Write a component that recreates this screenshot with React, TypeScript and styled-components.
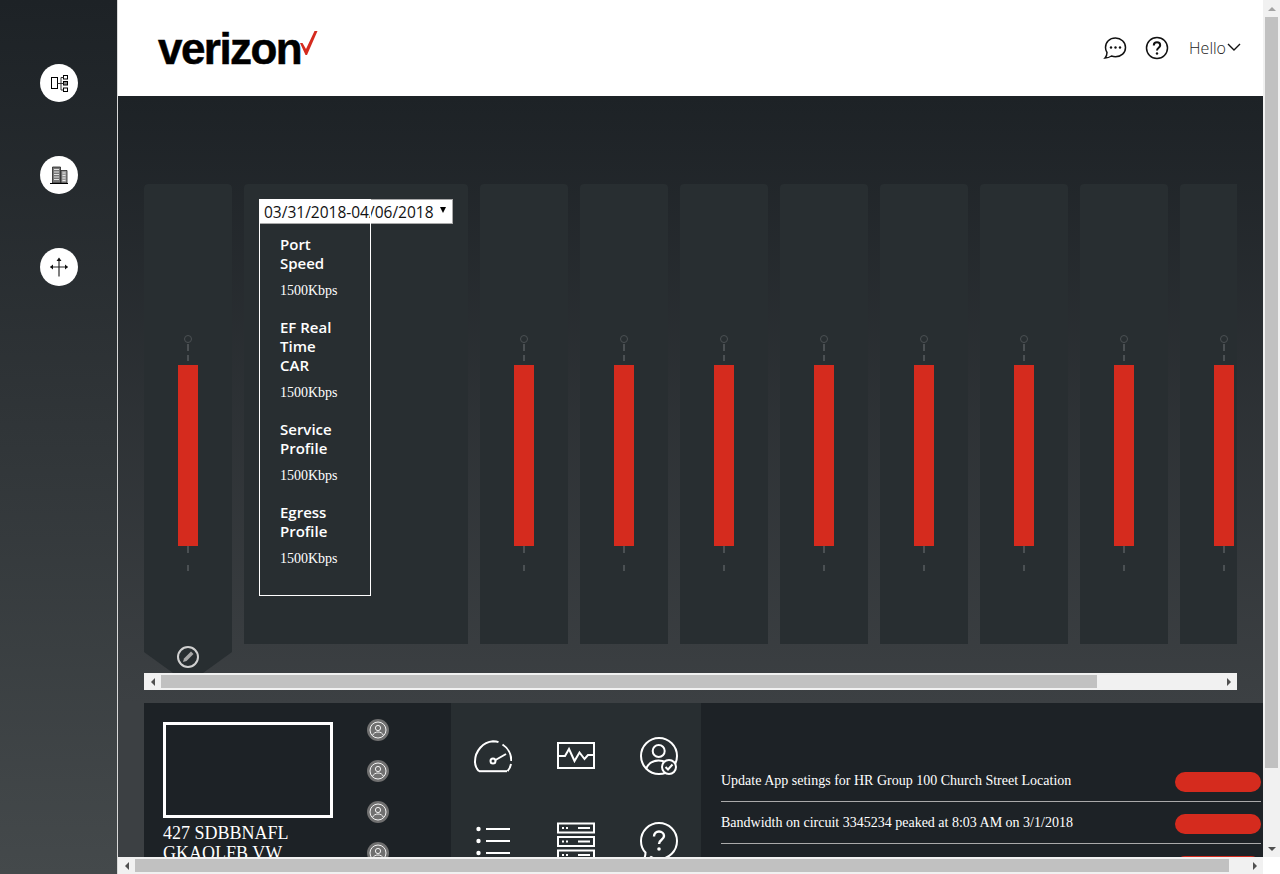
import React from "react";
import styled, { createGlobalStyle } from "styled-components";

const narrowCards = [0, 1, 2, 3, 4, 5, 6, 7];

const details = [
  { title: "Port Speed", value: "1500Kbps" },
  { title: "EF Real Time CAR", value: "1500Kbps" },
  { title: "Service Profile", value: "1500Kbps" },
  { title: "Egress Profile", value: "1500Kbps" },
];

const notifications = [
  "Update App setings for HR Group 100 Church Street Location",
  "Bandwidth on circuit 3345234 peaked at 8:03 AM on 3/1/2018",
  "",
];

const GlobalStyle = createGlobalStyle`
  html, body {
    margin: 0;
    padding: 0;
    height: 100%;
    overflow: hidden;
    background: #fff;
  }
`;

const Page = styled.div`
  display: flex;
  width: 1280px;
  height: 874px;
  overflow: hidden;
  font-family: "Liberation Serif", serif;
`;

const Sidebar = styled.nav`
  flex: none;
  box-sizing: border-box;
  width: 118px;
  height: 874px;
  padding-top: 64px;
  border-right: 1px solid #d8d8d8;
  background: linear-gradient(#1d2226, #44494b);
  display: flex;
  flex-direction: column;
  align-items: center;
  gap: 54px;
`;

const NavButton = styled.button`
  width: 38px;
  height: 38px;
  padding: 0;
  border: 0;
  border-radius: 50%;
  background: #fff;
  display: block;
`;

const Main = styled.div`
  flex: none;
  width: 1162px;
  display: flex;
  flex-direction: column;
`;

const MainTop = styled.div`
  height: 857px;
  display: flex;
`;

const Content = styled.div`
  width: 1145px;
  height: 857px;
  overflow: hidden;
`;

const Header = styled.header`
  height: 96px;
  background: #fff;
  display: flex;
  align-items: center;
  padding: 0 21px 0 40px;
`;

const Logo = styled.div`
  display: flex;
  align-items: flex-start;
  height: 40px;
  margin-top: 1px;
`;

const LogoText = styled.span`
  font-family: "Liberation Sans", sans-serif;
  font-weight: 700;
  font-size: 44px;
  line-height: 40px;
  letter-spacing: -1.55px;
  color: #000;
  -webkit-text-stroke: 0.5px #000;
`;

const LogoCheck = styled.svg`
  flex: none;
  margin: 2px 0 0 -1px;
`;

const HeaderActions = styled.div`
  margin-left: auto;
  display: flex;
  align-items: center;
`;

const HeaderIcon = styled.svg`
  width: 24px;
  height: 24px;
  margin-right: 18px;
  display: block;
`;

const Hello = styled.span`
  font-family: "Open Sans", sans-serif;
  font-size: 16px;
  font-weight: 300;
  color: #222;
  margin-left: 2px;
`;

const HelloChevron = styled.svg`
  flex: none;
  margin-top: -3px;
`;

const Body = styled.main`
  padding: 88px 0 0 26px;
  height: 761px;
  box-sizing: border-box;
  background: linear-gradient(#1d2226 0, #3c4043 607px);
`;

const Strip = styled.section`
  width: 1093px;
`;

const CardRow = styled.div`
  display: flex;
  gap: 12px;
  height: 489px;
  overflow: hidden;
`;

const Card = styled.div<{ $wide?: boolean }>`
  flex: none;
  position: relative;
  box-sizing: border-box;
  width: ${(p) => (p.$wide ? "224px" : "88px")};
  height: 460px;
  background: #282e31;
  border-radius: 4px 4px 0 0;
  padding-top: 151px;
  display: flex;
  flex-direction: column;
  align-items: center;
`;

const FirstCard = styled(Card)`
  height: 489px;
  clip-path: path("M0 4 Q0 0 4 0 H84 Q88 0 88 4 V468 L59 489 H29 L0 468 Z");
`;

const Whisker = styled.svg`
  display: block;
  width: 10px;
`;

const Bar = styled.div`
  width: 20px;
  height: 181px;
  background: #d52b1e;
`;

const PencilIcon = styled.svg`
  width: 24px;
  height: 24px;
  margin-top: 73px;
  display: block;
`;

const DetailCard = styled(Card)`
  padding: 15px 0 0 15px;
  display: block;
`;

const DateSelect = styled.div`
  box-sizing: border-box;
  width: 194px;
  height: 25px;
  background: #fff;
  border: 1px solid #a9a9a9;
  border-left: 0;
  display: flex;
  align-items: center;
  padding-left: 5px;
  font-family: "Open Sans", sans-serif;
  font-size: 15.5px;
  color: #111;
  white-space: nowrap;
`;

const SelectArrow = styled.span`
  width: 0;
  height: 0;
  margin: -4px 0 0 6px;
  border-left: 3.5px solid transparent;
  border-right: 3.5px solid transparent;
  border-top: 6px solid #000;
`;

const DetailBox = styled.div`
  position: absolute;
  left: 15px;
  top: 15px;
  box-sizing: border-box;
  width: 112px;
  height: 397px;
  border: 1px solid #fff;
  padding: 35px 20px 0;
  color: #fff;
`;

const DetailItem = styled.div`
  margin-bottom: 19px;
`;

const DetailTitle = styled.div`
  max-width: 66px;
  font-family: "Open Sans", sans-serif;
  font-weight: 600;
  font-size: 15px;
  line-height: 19px;
`;

const DetailValue = styled.div`
  font-size: 14px;
  line-height: 16px;
  margin-top: 10px;
`;

const HBar = styled.div`
  height: 17px;
  background: #f1f1f1;
  display: flex;
  align-items: center;
  flex: none;
`;

const VBar = styled.div`
  width: 17px;
  height: 857px;
  background: #f1f1f1;
  display: flex;
  flex-direction: column;
  align-items: center;
`;

const ArrowBox = styled.div`
  flex: none;
  width: 17px;
  height: 17px;
  display: flex;
  align-items: center;
  justify-content: center;
`;

const Triangle = styled.span<{ $dir: "left" | "right" | "up" | "down" }>`
  width: 0;
  height: 0;
  border-style: solid;
  border-color: transparent;
  border-width: ${(p) =>
    p.$dir === "left" || p.$dir === "right" ? "4px 0" : "0 4px"};
  ${(p) => {
    if (p.$dir === "left") return "border-right: 4px solid #505050;";
    if (p.$dir === "right") return "border-left: 4px solid #505050;";
    if (p.$dir === "up") return "border-bottom: 4px solid #a3a3a3;";
    return "border-top: 4px solid #505050;";
  }}
`;

const HThumb = styled.div<{ $size: number }>`
  width: ${(p) => p.$size}px;
  height: 13px;
  background: #c1c1c1;
`;

const VThumb = styled.div`
  width: 13px;
  height: 751px;
  background: #c1c1c1;
`;

const Spacer = styled.div`
  flex: 1;
`;

const Corner = styled.div`
  width: 17px;
  height: 17px;
  background: #fff;
`;

const BottomRow = styled.section`
  margin-top: 13px;
  height: 200px;
  display: flex;
`;

const SitePanel = styled.div`
  flex: none;
  box-sizing: border-box;
  width: 307px;
  padding: 16px 0 0 19px;
  background: #1d2226;
  display: flex;
  gap: 34px;
`;

const SiteInfo = styled.div`
  width: 170px;
  padding-top: 3px;
  color: #fff;
  font-size: 18px;
  line-height: 20px;
`;

const SitePhoto = styled.div`
  box-sizing: border-box;
  height: 96px;
  border: 3px solid #fff;
  margin-bottom: 5px;
`;

const Avatars = styled.div`
  display: flex;
  flex-direction: column;
  gap: 19px;
`;

const Avatar = styled.svg`
  width: 22px;
  height: 22px;
  display: block;
`;

const ToolPanel = styled.div`
  flex: none;
  box-sizing: border-box;
  width: 250px;
  padding-top: 34px;
  background: #282e31;
  display: grid;
  grid-template-columns: repeat(3, 83px);
  grid-auto-rows: 38px;
  row-gap: 47px;
  justify-content: center;
  justify-items: center;
`;

const ToolIcon = styled.svg`
  width: 38px;
  height: 38px;
  display: block;
`;

const NotificationPanel = styled.div`
  flex: 1;
  padding: 57px 0 0 20px;
  background: #1d2226;
`;

const NotificationRow = styled.div`
  box-sizing: border-box;
  width: 540px;
  height: 42px;
  border-bottom: 1px solid #aaa;
  display: flex;
  align-items: center;
  justify-content: space-between;
  color: #fff;
  font-size: 14px;
`;

const Pill = styled.span`
  width: 86px;
  height: 20px;
  border-radius: 10px;
  background: #d52b1e;
  margin-top: 3px;
`;

const Gauge = () => (
  <>
    <Whisker width="10" height="30" viewBox="0 0 10 30">
      <circle cx="5" cy="4" r="3.5" fill="none" stroke="#4b5053" />
      <path d="M5 9v7M5 20v6" stroke="#4b5053" strokeWidth="2" fill="none" />
    </Whisker>
    <Bar />
    <Whisker width="10" height="26" viewBox="0 0 10 26">
      <path d="M5 0v7M5 19v6" stroke="#4b5053" strokeWidth="2" fill="none" />
    </Whisker>
  </>
);

const UserIcon = () => (
  <Avatar viewBox="0 0 22 22">
    <circle cx="11" cy="11" r="11" fill="#707070" />
    <circle cx="11" cy="11" r="8" fill="none" stroke="#f2f2f2" strokeWidth="1" />
    <circle cx="11" cy="9" r="2.6" fill="none" stroke="#f2f2f2" strokeWidth="1" />
    <path d="M5.500 16.500c1-2.500 3-3.500 5.500-3.500s4.500 1 5.500 3.500" fill="none" stroke="#f2f2f2" strokeWidth="1" />
  </Avatar>
);

const App: React.FC = () => {
  return (
    <Page>
      <GlobalStyle />
      <Sidebar>
        <NavButton>
          <svg width="38" height="38" viewBox="0 0 38 38" fill="none" stroke="#000">
            <rect x="11.500" y="13.500" width="6" height="11" />
            <rect x="23.500" y="11.500" width="4" height="3.500" />
            <rect x="23.500" y="17.500" width="4" height="3.500" fill="#888" />
            <rect x="23.500" y="24" width="4" height="3.500" />
            <path d="M17.500 19.500h6M21 13.500v12.500M21 13.500h2.500M21 26h2.500" stroke="#333" />
          </svg>
        </NavButton>
        <NavButton>
          <svg width="38" height="38" viewBox="0 0 38 38">
            <path d="M12.500 11h8v16h-8z" fill="#777" stroke="#222" strokeWidth="0.8" />
            <path d="M21 14.500h6V27h-6z" fill="#999" stroke="#222" strokeWidth="0.8" />
            <path d="M14 13.500h5M14 16h5M14 18.500h5M14 21h5M14 23.500h5" stroke="#eee" strokeWidth="0.9" />
            <path d="M22.500 17h3M22.500 19.500h3M22.500 22h3M22.500 24.500h3" stroke="#eee" strokeWidth="0.9" />
            <path d="M10 27.500h18" stroke="#000" />
          </svg>
        </NavButton>
        <NavButton>
          <svg width="38" height="38" viewBox="0 0 38 38" fill="none">
            <path d="M19 11v17.500" stroke="#555" strokeWidth="1.500" />
            <path d="M10.500 19h17" stroke="#222" />
            <path d="M19 9.500l-2.500 3.500h5zM10 19l3-2.500v5zM28 19l-3-2.500v5z" fill="#111" />
          </svg>
        </NavButton>
      </Sidebar>
      <Main>
        <MainTop>
          <Content>
            <Header>
              <Logo>
                <LogoText>verizon</LogoText>
                <LogoCheck width="18" height="24" viewBox="0 0 18 24">
                  <path d="M0 12l2.500 0 3.500 6L14.500 0H17.500L7 24H5.500z" fill="#d52b1e" />
                </LogoCheck>
              </Logo>
              <HeaderActions>
                <HeaderIcon viewBox="0 0 24 24" fill="none" stroke="#111" strokeWidth="1.500">
                  <path d="M12.500 2C6.500 2 2.500 6 2.500 11.500c0 2 .5 3.600 1.500 5 0 2-.5 4-2 5.500 2.500 0 5-1 6.500-2 1.300.5 2.700.7 4 .7 5.700 0 10-3.800 10-9.200S18 2 12.500 2z" />
                  <circle cx="8" cy="11.500" r="1.200" fill="#111" stroke="none" />
                  <circle cx="12.500" cy="11.500" r="1.200" fill="#111" stroke="none" />
                  <circle cx="17" cy="11.500" r="1.200" fill="#111" stroke="none" />
                </HeaderIcon>
                <HeaderIcon viewBox="0 0 24 24" fill="none" stroke="#111" strokeWidth="1.500">
                  <circle cx="12" cy="12" r="10.500" />
                  <path d="M8.800 9.500c0-2 1.400-3.200 3.200-3.200s3.200 1.200 3.200 2.900c0 2.600-3.200 2.400-3.200 5.300" strokeWidth="2" />
                  <circle cx="12" cy="17.500" r="1.200" fill="#111" stroke="none" />
                </HeaderIcon>
                <Hello>Hello</Hello>
                <HelloChevron width="16" height="10" viewBox="0 0 16 10" fill="none" stroke="#111" strokeWidth="1.400">
                  <path d="M2 2l6 6 6-6" />
                </HelloChevron>
              </HeaderActions>
            </Header>
            <Body>
              <Strip>
                <CardRow>
                  <FirstCard>
                    <Gauge />
                    <PencilIcon viewBox="0 0 24 24" fill="none">
                      <circle cx="12" cy="12" r="10" stroke="#d0d0d0" strokeWidth="2" />
                      <path d="M15 6.500l2.500 2.500-7 7-3.500 1 1-3.500z" fill="#a8a8a8" />
                    </PencilIcon>
                  </FirstCard>
                  <DetailCard $wide>
                    <DateSelect>
                      03/31/2018-04/06/2018
                      <SelectArrow />
                    </DateSelect>
                    <DetailBox>
                      {details.map((item) => (
                        <DetailItem key={item.title}>
                          <DetailTitle>{item.title}</DetailTitle>
                          <DetailValue>{item.value}</DetailValue>
                        </DetailItem>
                      ))}
                    </DetailBox>
                  </DetailCard>
                  {narrowCards.map((id) => (
                    <Card key={id}>
                      <Gauge />
                    </Card>
                  ))}
                </CardRow>
                <HBar>
                  <ArrowBox>
                    <Triangle $dir="left" />
                  </ArrowBox>
                  <HThumb $size={936} />
                  <Spacer />
                  <ArrowBox>
                    <Triangle $dir="right" />
                  </ArrowBox>
                </HBar>
              </Strip>
              <BottomRow>
                <SitePanel>
                  <SiteInfo>
                    <SitePhoto />
                    427 SDBBNAFL GKAOLFB VW
                  </SiteInfo>
                  <Avatars>
                    <UserIcon />
                    <UserIcon />
                    <UserIcon />
                    <UserIcon />
                  </Avatars>
                </SitePanel>
                <ToolPanel>
                  <ToolIcon viewBox="0 0 38 38" fill="none" stroke="#fff" strokeWidth="2">
                    <path d="M5 34.200C2.200 31.500 1 28 1 24.500 1 14 9 5 19 4.300c2 0 4 .2 5.500.8M28.500 7.500c5.500 3.500 9 10 8.800 16.500M37 27c-.5 2.500-1.500 5-3.500 7.200" />
                    <path d="M5 34.200h28" />
                    <circle cx="19" cy="24" r="2.500" />
                    <path d="M21.500 23l10.500-6" />
                  </ToolIcon>
                  <ToolIcon viewBox="0 0 38 38" fill="none" stroke="#fff" strokeWidth="2">
                    <rect x="1" y="6" width="36" height="25" />
                    <path d="M1 19h7l4-7 5.500 12 5-8.500 5 6.500 3.500-4H37" />
                  </ToolIcon>
                  <ToolIcon viewBox="0 0 38 38" fill="none" stroke="#fff" strokeWidth="2">
                    <circle cx="19" cy="19" r="18" />
                    <circle cx="18.700" cy="14" r="6" />
                    <path d="M6 32c2.500-6 7-8.500 12.500-8.500 3 0 5.500.7 8 2" />
                    <circle cx="29" cy="30" r="7" fill="#282e31" />
                    <path d="M25.500 30l2.500 2.500 4.500-5" />
                  </ToolIcon>
                  <ToolIcon viewBox="0 0 38 38" fill="#fff" stroke="none">
                    <circle cx="4.500" cy="7" r="2.200" />
                    <circle cx="4.500" cy="19" r="2.200" />
                    <circle cx="4.500" cy="31" r="2.200" />
                    <rect x="12" y="6" width="24" height="2" />
                    <rect x="12" y="18" width="24" height="2" />
                    <rect x="12" y="30" width="24" height="2" />
                  </ToolIcon>
                  <ToolIcon viewBox="0 0 38 38" fill="none" stroke="#fff" strokeWidth="2">
                    <rect x="1" y="1.500" width="36" height="9" />
                    <rect x="1" y="15" width="36" height="9" />
                    <rect x="1" y="28.500" width="36" height="9" />
                    <path d="M21 6h12M21 19.500h12M21 33h12" />
                    <path d="M5 6h2M9 6h2M5 19.500h2M9 19.500h2M5 33h2M9 33h2" />
                  </ToolIcon>
                  <ToolIcon viewBox="0 0 38 38" fill="none" stroke="#fff" strokeWidth="2">
                    <path d="M19 1C9 1 1 9 1 19c0 4.500 1.500 8.500 4.500 11.500 0 2.500-.5 5-2 7 3 0 5.500-1 7.500-2.500 2.500 1.300 5.300 2 8 2 10 0 18-8 18-18S29 1 19 1z" />
                    <path d="M14 14.500c0-3 2.200-5 5-5s5 2 5 4.500c0 4-5 3.500-5 8" strokeWidth="2.400" />
                    <circle cx="19" cy="27" r="1.800" fill="#fff" stroke="none" />
                  </ToolIcon>
                </ToolPanel>
                <NotificationPanel>
                  {notifications.map((text, i) => (
                    <NotificationRow key={i}>
                      <span>{text}</span>
                      <Pill />
                    </NotificationRow>
                  ))}
                </NotificationPanel>
              </BottomRow>
            </Body>
          </Content>
          <VBar>
            <ArrowBox>
              <Triangle $dir="up" />
            </ArrowBox>
            <VThumb />
            <Spacer />
            <ArrowBox>
              <Triangle $dir="down" />
            </ArrowBox>
          </VBar>
        </MainTop>
        <HBar>
          <ArrowBox>
            <Triangle $dir="left" />
          </ArrowBox>
          <HThumb $size={1094} />
          <Spacer />
          <ArrowBox>
            <Triangle $dir="right" />
          </ArrowBox>
          <Corner />
        </HBar>
      </Main>
    </Page>
  );
};

export default App;
